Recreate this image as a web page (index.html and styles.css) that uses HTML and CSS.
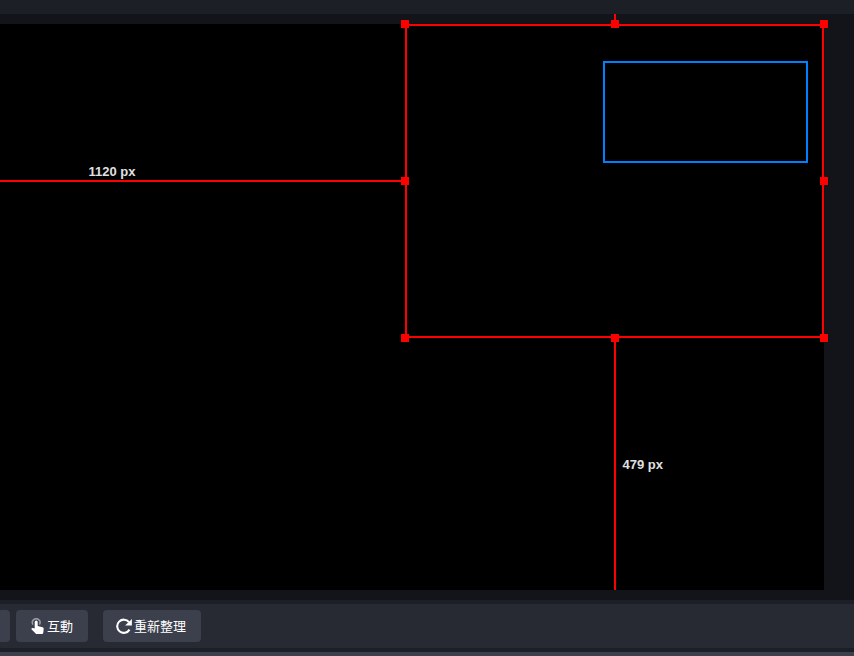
FILE: index.html
```html
<!DOCTYPE html>
<html lang="zh-Hant">
<head>
<meta charset="utf-8">
<title>Preview</title>
<link rel="stylesheet" href="styles.css">
</head>
<body>
<main class="preview">
  <div class="canvas"></div>
  <div class="guide guide-left"></div>
  <div class="guide guide-top"></div>
  <div class="guide guide-bottom"></div>
  <span class="distance distance-left">1120 px</span>
  <span class="distance distance-bottom">479 px</span>
  <div class="source hovered"></div>
  <div class="source selected">
    <i class="handle nw"></i><i class="handle n"></i><i class="handle ne"></i>
    <i class="handle w"></i><i class="handle e"></i>
    <i class="handle sw"></i><i class="handle s"></i><i class="handle se"></i>
  </div>
</main>
<nav class="toolbar">
  <button class="button clipped" aria-hidden="true"></button>
  <button class="button interact">
    <svg width="13" height="16" viewBox="0 0 13 16"><path d="M2 6.6A3.8 3.8 0 1 1 8.4 6.6" fill="none" stroke="#9b9da5" stroke-width="1.5"/><path d="M3.7 4.1a1.5 1.5 0 0 1 3 0v3.8l4.9 1.4q1.1.4 1.1 1.5l-.5 4.1q-.2 1.1-1.2 1.1H5.8q-.7 0-1.2-.5L.2 10.9l.7-.7q.4-.4 1-.2l1.8.5z" fill="#fff"/></svg>
    <span>互動</span>
  </button>
  <button class="button refresh">
    <svg width="16" height="16" viewBox="0 0 16 16"><path d="M13 4.2A6.6 6.6 0 1 0 13.5 11.6" fill="none" stroke="#fff" stroke-width="2.1"/><path d="M15.9.9v6.5H9.1z" fill="#fff"/></svg>
    <span>重新整理</span>
  </button>
</nav>
<footer class="dock"></footer>
</body>
</html>
```
FILE: styles.css
```css
* { box-sizing: border-box; }

body {
  margin: 0;
  width: 854px;
  height: 656px;
  overflow: hidden;
  display: flex;
  flex-direction: column;
  padding-top: 14px;
  background: #1d1f26;
  font-family: "Open Sans", "Noto Sans CJK TC", sans-serif;
}

.preview {
  position: relative;
  height: 586px;
  padding: 10px 30px 10px 0;
  background: #131419;
  overflow: hidden;
}

.canvas { height: 566px; background: #000; }

.guide { position: absolute; background: #f00; }
.guide-left { left: 0; top: 166px; width: 405px; height: 2px; }
.guide-top { left: 614px; top: 0; width: 2px; height: 10px; }
.guide-bottom { left: 614px; top: 324px; width: 2px; height: 252px; }

.distance {
  position: absolute;
  color: #e0e0e0;
  font: bold 13px/16px "Liberation Sans", sans-serif;
  white-space: nowrap;
}
.distance-left { left: 88.5px; top: 150px; }
.distance-bottom { left: 622.5px; top: 443px; }

.source { position: absolute; border: 2px solid; }
.hovered { left: 603px; top: 47px; width: 205px; height: 102px; border-color: #007fff; }
.selected { left: 405px; top: 10px; width: 419px; height: 314px; border-color: #f00; }

.handle { position: absolute; width: 8px; height: 8px; background: #f00; }
.nw, .n, .ne { top: -6px; }
.w, .e { top: 151px; }
.sw, .s, .se { top: 308px; }
.nw, .w, .sw { left: -6px; }
.n, .s { left: 204px; }
.ne, .e, .se { left: 413px; }

.toolbar {
  display: flex;
  align-items: center;
  height: 44px;
  margin: 4px 0;
  background: #272a33;
}

.button {
  display: flex;
  align-items: center;
  height: 32px;
  padding: 0;
  border: 0;
  border-radius: 4px;
  background: #3c404d;
  color: #fff;
  font: 400 13px/20px "Noto Sans CJK TC", sans-serif;
}
.button svg { flex: none; }
.clipped { width: 10px; margin-right: 6px; border-radius: 0 4px 4px 0; }
.interact { width: 72px; margin-right: 15px; padding-left: 15px; gap: 3px; }
.refresh { width: 98px; padding-left: 13px; gap: 2px; }

.dock { height: 4px; background: #3c404d; }
```
